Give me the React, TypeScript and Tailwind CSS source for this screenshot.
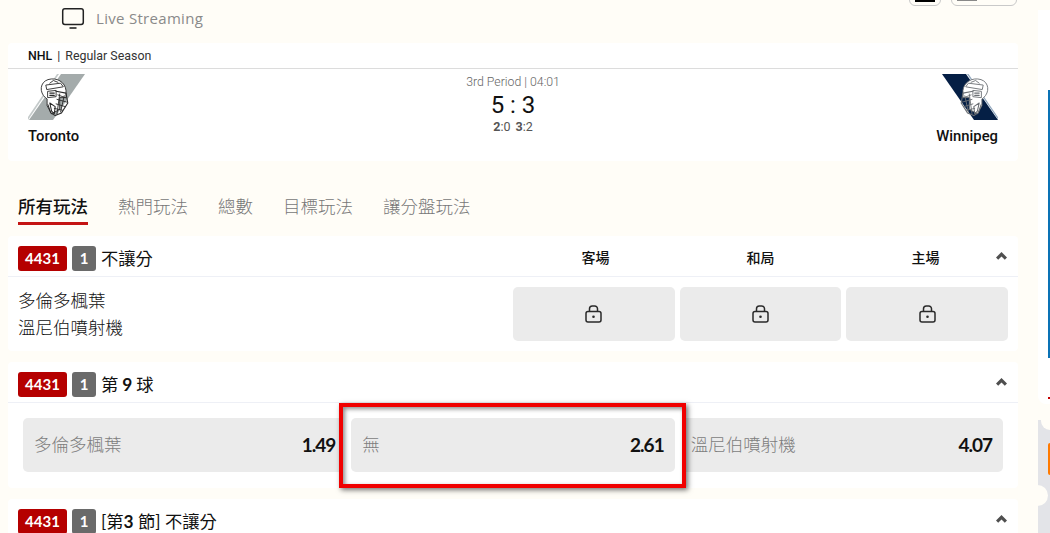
import React from "react";

const cjk = "font-['Lato','Noto_Sans_CJK_TC',sans-serif]";

function Helmet({ stroke, fill }: { stroke: string; fill: string }) {
  return (
    <g transform="translate(2 2) scale(0.9)" fill="none" stroke={stroke} strokeWidth="1" strokeLinejoin="round" strokeLinecap="round">
      <path d="M17 24 C10 18 11 7 20 4 C30 1 39 7 40 16 L40 24 L33 24 L33 37 L24 42 L19 33 L19 26 Z" fill={fill} />
      <path d="M18 10 L34 8 L37 12 L19 15 Z" fill={fill} />
      <path d="M22 8 L26 5 L31 7" />
      <path d="M20 17 L29 16 L29 23 L20 24 Z" />
      <path d="M22 19 L27 19 M22 21.5 L27 21.5" strokeWidth="1.3" />
      <path d="M29 17 L40 19 L42 30 L35 41 L28 44 L23 41 L20 32" strokeWidth="1.2" />
      <path d="M31 21 L39 24 M30 26 L41 29 M29 31 L39 34 M27 36 L36 38 M33 20 L30 42 M38 22 L34 40" />
      <path d="M22 30 L24 39 L27 42 L28 34 Z" strokeWidth="1.2" />
    </g>
  );
}

function TorontoLogo() {
  return (
    <svg width="57" height="46" viewBox="0 0 57 46" className="block">
      <path d="M33 0 L57 0 L25 46 L1 46 Z" fill="#a4abab" />
      <path d="M29 0 L31 0 L0 46 L-2 46 Z" fill="#c4caca" />
      <Helmet stroke="#2a2a2a" fill="#ffffff" />
    </svg>
  );
}

function WinnipegLogo() {
  return (
    <svg width="57" height="46" viewBox="0 0 57 46" className="block">
      <path d="M1 0 L25 0 L57 46 L33 46 Z" fill="#051f45" />
      <path d="M26 0 L27.5 0 L57.5 44 L57.5 46 Z" fill="#8fa6bd" />
      <g transform="translate(60 0) scale(-1 1)">
        <Helmet stroke="#6b6f74" fill="#ffffff" />
      </g>
    </svg>
  );
}

function Lock() {
  return (
    <svg width="17" height="18" viewBox="0 0 17 18" fill="none" stroke="#2a2a2a" strokeWidth="1.5">
      <rect x="1" y="6.5" width="15" height="10.5" rx="2" />
      <path d="M4.5 6.5 V3.8 A2.8 2.8 0 0 1 7.3 1 H9.7 A2.8 2.8 0 0 1 12.5 3.8 V6.5" />
      <circle cx="8.5" cy="11.7" r="1.3" fill="#2a2a2a" stroke="none" />
    </svg>
  );
}

function Chevron() {
  return (
    <svg width="11" height="8" viewBox="0 0 11 8" className="block">
      <path d="M5.5 0 L11 5.5 L8.8 7.7 L5.5 4.6 L2.2 7.7 L0 5.5 Z" fill="#4f4f4f" />
    </svg>
  );
}

function MarketHeader({ children, right }: { children: React.ReactNode; right?: React.ReactNode }) {
  return (
    <div className="flex h-[41px] items-center border-b border-[#eef0f6] pl-[10px] pt-[5px]">
      <span className="flex h-[25px] w-[49px] items-center justify-center rounded-[3px] bg-[#b50000] text-[15px] font-bold text-white">4431</span>
      <span className="ml-[5px] flex h-[25px] w-[24px] items-center justify-center rounded-[3px] bg-[#6a6a6a] text-[15px] font-bold text-white">1</span>
      <span className="ml-[5px] flex-1 text-[17.3px] leading-[25px] text-[#111]">{children}</span>
      {right}
      <span className="relative -mt-[5px] ml-auto pr-[11px]"><Chevron /></span>
    </div>
  );
}

function Odd({ label, value }: { label: string; value: string }) {
  return (
    <div className="flex h-[54px] items-center justify-between rounded-[5px] bg-[#ebebeb] pl-[11px] pr-[11px]">
      <span className="text-[17.5px] font-light text-[#7d7d7d]">{label}</span>
      <span className="text-[19px] font-bold tracking-[-1px] text-[#111]">{value}</span>
    </div>
  );
}

function LockCell() {
  return (
    <div className="flex h-[54px] items-center justify-center rounded-[5px] bg-[#ebebeb]">
      <Lock />
    </div>
  );
}

export default function App() {
  return (
    <div className={`flex h-[533px] w-[1050px] overflow-hidden bg-[#fffdf7] ${cjk}`}>
      <div className="w-[1038px] shrink-0 pl-[8px] pr-[20px]">
        <div className="flex h-[43px] items-start">
          <svg width="24" height="23" viewBox="0 0 24 23" fill="none" className="ml-[53px] mt-[7px] shrink-0">
            <rect x="1.7" y="1.7" width="20.6" height="15.8" rx="2.2" stroke="#222" strokeWidth="1.5" />
            <path d="M8.5 21 H15.5" stroke="#222" strokeWidth="1.6" />
          </svg>
          <span className="ml-[11px] mt-[8px] text-[15px] leading-[20px] tracking-[0.3px] text-[#8a8a8a] font-['Open_Sans',sans-serif]">Live Streaming</span>
          <div className="ml-auto mr-[1px] -mt-[24px] flex gap-[10px]">
            <div className="flex h-[30px] w-[32px] items-end justify-center rounded-[6px] border border-[#c9c9c9] pb-[3px]">
              <div className="h-[2px] w-[20px] bg-black" />
            </div>
            <div className="flex h-[30px] w-[66px] items-end rounded-[6px] border border-[#c9c9c9] pb-[4px] pl-[5px]">
              <div className="h-[2px] w-[20px] bg-[#888]" />
            </div>
          </div>
        </div>

        <div className="h-[118px] rounded-[4px] bg-white font-['Roboto',sans-serif]">
          <div className="flex h-[26px] items-center border-b border-[#dcdcdc] pl-[20px] pt-[2px] text-[12.4px] text-[#333]">
            <span className="font-medium text-[#111]">NHL</span>
            <span className="mx-[5px]">|</span>
            <span>Regular Season</span>
          </div>
          <div className="flex justify-between px-[20px] pt-[5px]">
            <div className="flex w-[70px] flex-col">
              <TorontoLogo />
              <span className="mt-[7px] text-[14.8px] font-medium leading-[18px] text-[#111]">Toronto</span>
            </div>
            <div className="flex flex-col items-center pt-[1px]">
              <span className="text-[12.3px] font-light leading-[14px] text-[#666]">3rd Period | 04:01</span>
              <span className="mt-[2px] text-[24px] leading-[28px] text-[#111]">5 : 3</span>
              <span className="mt-[1px] text-[12.5px] leading-[14px] text-[#555]">
                <b className="font-bold">2</b>:0 <b className="ml-[2px] font-bold">3</b>:2
              </span>
            </div>
            <div className="flex w-[70px] flex-col items-end">
              <WinnipegLogo />
              <span className="mt-[7px] text-[14.8px] font-medium leading-[18px] text-[#111]">Winnipeg</span>
            </div>
          </div>
        </div>

        <div className="mt-[29px] flex h-[35px] gap-[30px] pl-[10px] text-[17.5px] leading-[32px] font-light text-[#777]">
          <span className="h-[35px] border-b-[3px] border-[#c41414] pt-[1px] font-medium text-[#111]">所有玩法</span>
          <span className="pt-[1px]">熱門玩法</span>
          <span className="pt-[1px]">總數</span>
          <span className="pt-[1px]">目標玩法</span>
          <span className="pt-[1px]">讓分盤玩法</span>
        </div>

        <div className="mt-[11px] h-[115px] rounded-[4px] bg-white">
          <MarketHeader
            right={
              <div className="-mr-[12px] -mt-[3px] grid w-[495px] grid-cols-3 text-center text-[14px] font-medium leading-[25px] text-[#111]">
                <span>客場</span>
                <span>和局</span>
                <span>主場</span>
              </div>
            }
          >
            不讓分
          </MarketHeader>
          <div className="flex pl-[10px] pr-[10px] pt-[10px]">
            <div className="w-[495px] text-[17.5px] font-light leading-[27px] text-[#111]">
              <div>多倫多楓葉</div>
              <div>溫尼伯噴射機</div>
            </div>
            <div className="grid flex-1 grid-cols-3 gap-[5px]">
              <LockCell />
              <LockCell />
              <LockCell />
            </div>
          </div>
        </div>

        <div className="mt-[11px] h-[126px] rounded-[4px] bg-white">
          <MarketHeader>第<b className="mx-[4px] font-bold">9</b>球</MarketHeader>
          <div className="grid grid-cols-3 gap-[5px] px-[15px] pt-[15px]">
            <Odd label="多倫多楓葉" value="1.49" />
            <div className="relative">
              <div className="absolute -bottom-[16px] -left-[12px] -right-[11px] -top-[15px] border-[4px] border-[#f00000] bg-white shadow-[2px_2px_5px_rgba(0,0,0,0.55),inset_2px_2px_4px_rgba(0,0,0,0.45)]" />
              <div className="relative"><Odd label="無" value="2.61" /></div>
            </div>
            <Odd label="溫尼伯噴射機" value="4.07" />
          </div>
        </div>

        <div className="mt-[11px] h-[80px] rounded-[4px] bg-white">
          <MarketHeader>[第<b className="font-bold">3</b> 節] 不讓分</MarketHeader>
        </div>
      </div>

      <div className="relative flex w-[12px] shrink-0 flex-col">
        <div className="mt-[10px] h-[394px] rounded-bl-[8px] bg-white pt-[80px]">
          <div className="ml-auto h-[268px] w-[2px] bg-[#0a72b5]" />
          <div className="ml-auto mt-[39px] h-[2px] w-[2px] bg-[#c40000]" />
        </div>
        <div className="mt-[16px] flex-1 bg-[#e3e4e8]">
          <div className="ml-[3px] h-[10px] rounded-bl-[9px] bg-[#fffdf7]" />
          <div className="ml-auto mt-[13px] h-[32px] w-[2px] rounded-l-[2px] bg-[#ff7a00]" />
        </div>
        <div className="absolute left-[-1px] top-[485px] h-[21px] w-[11px] rounded-r-full bg-[#fffdf7]" />
      </div>
    </div>
  );
}
